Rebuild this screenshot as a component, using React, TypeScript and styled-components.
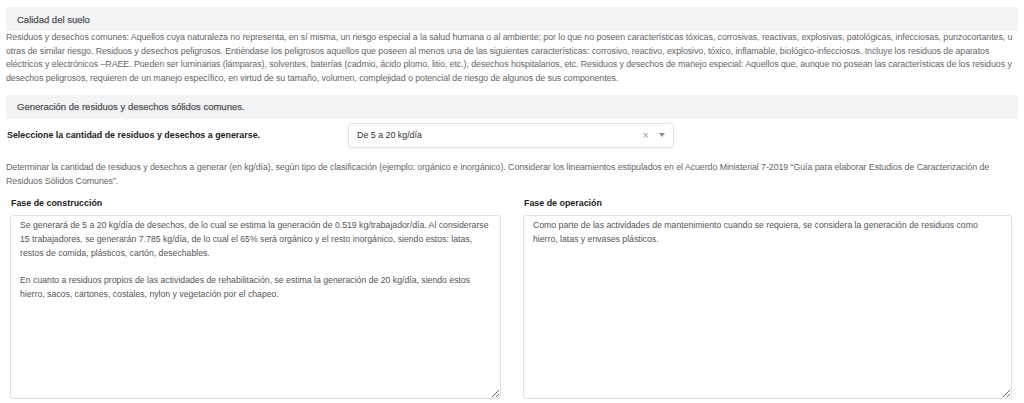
import { createGlobalStyle, styled } from 'styled-components';

const GlobalStyle = createGlobalStyle`
  html, body {
    margin: 0;
    padding: 0;
    background: #fff;
  }
  body {
    font-family: "Liberation Sans", Arial, sans-serif;
    font-size: 8.85px;
    color: #5f6368;
  }
`;

const Page = styled.div`
  padding: 7px 6px 0 6px;
`;

const SectionBar = styled.div`
  height: 24px;
  display: flex;
  align-items: center;
  padding: 0 11px;
  background: #f2f3f5;
  color: #555;
  font-size: 9.5px;
  -webkit-text-stroke: 0.25px #555;
`;

const Paragraph = styled.p<{ $top?: number; $bottom?: number }>`
  margin: ${p => p.$top ?? 0}px 0 ${p => p.$bottom ?? 0}px;
  line-height: 13.7px;
  letter-spacing: -0.07px;
  color: #666;
`;

const SelectRow = styled.div`
  display: flex;
  align-items: center;
  margin: 4px 0 13px;
`;

const Label = styled.label`
  display: block;
  color: #222;
  font-weight: 700;
  font-size: 8.9px;
`;

const RowLabel = styled(Label)`
  width: 341px;
  padding-left: 1px;
`;

const SelectBox = styled.div`
  width: 326px;
  height: 25px;
  box-sizing: border-box;
  display: flex;
  align-items: center;
  padding: 0 8px 0 8px;
  border: 1px solid #e1e3e8;
  border-radius: 3px;
  box-shadow: 0 1px 2px rgba(0, 0, 0, 0.05);
  color: #333;
  background: #fff;
`;

const SelectValue = styled.span`
  flex: 1;
`;

const ClearIcon = styled.span`
  color: #9aa0a6;
  font-size: 11px;
  margin-right: 10px;
`;

const Caret = styled.span`
  width: 0;
  height: 0;
  border-left: 3.5px solid transparent;
  border-right: 3.5px solid transparent;
  border-top: 4px solid #8a8f95;
`;

const Columns = styled.div`
  display: grid;
  grid-template-columns: 491px 489px;
  column-gap: 22px;
  margin-top: 8px;
  padding-left: 4px;
`;

const Column = styled.div`
  display: flex;
  flex-direction: column;
`;

const ColumnLabel = styled(Label)`
  margin: 0 0 5px 1px;
  line-height: 14px;
`;

const TextArea = styled.textarea`
  height: 184px;
  box-sizing: border-box;
  padding: 3px 9px;
  border: 1px solid #dfe1e6;
  border-radius: 3px;
  font-family: "Liberation Sans", Arial, sans-serif;
  font-size: 8.7px;
  line-height: 13.7px;
  color: #555;
  resize: vertical;
  outline: none;
`;

const construccion = `Se generará de 5 a 20 kg/día de desechos, de lo cual se estima la generación de 0.519 kg/trabajador/día. Al considerarse 15 trabajadores, se generarán 7.785 kg/día, de lo cual el 65% será orgánico y el resto inorgánico, siendo estos: latas, restos de comida, plásticos, cartón, desechables.

En cuanto a residuos propios de las actividades de rehabilitación, se estima la generación de 20 kg/día, siendo estos hierro, sacos, cartones, costales, nylon y vegetación por el chapeo.`;

const operacion = `Como parte de las actividades de mantenimiento cuando se requiera, se considera la generación de residuos como hierro, latas y envases plásticos.`;

export default function App() {
  return (
    <>
      <GlobalStyle />
      <Page>
        <SectionBar>Calidad del suelo</SectionBar>
        <Paragraph $top={0} $bottom={9}>
          Residuos y desechos comunes: Aquellos cuya naturaleza no representa, en sí misma, un riesgo especial a la salud
          humana o al ambiente; por lo que no poseen características tóxicas, corrosivas, reactivas, explosivas,
          patológicas, infecciosas, punzocortantes, u otras de similar riesgo. Residuos y desechos peligrosos. Entiéndase
          los peligrosos aquellos que poseen al menos una de las siguientes características: corrosivo, reactivo,
          explosivo, tóxico, inflamable, biológico-infecciosos. Incluye los residuos de aparatos eléctricos y electrónicos
          –RAEE. Pueden ser luminarias (lámparas), solventes, baterías (cadmio, ácido plomo, litio, etc.), desechos
          hospitalarios, etc. Residuos y desechos de manejo especial: Aquellos que, aunque no posean las características de
          los residuos y desechos peligrosos, requieren de un manejo específico, en virtud de su tamaño, volumen,
          complejidad o potencial de riesgo de algunos de sus componentes.
        </Paragraph>

        <SectionBar>Generación de residuos y desechos sólidos comunes.</SectionBar>
        <SelectRow>
          <RowLabel>Seleccione la cantidad de residuos y desechos a generarse.</RowLabel>
          <SelectBox>
            <SelectValue>De 5 a 20 kg/día</SelectValue>
            <ClearIcon>×</ClearIcon>
            <Caret />
          </SelectBox>
        </SelectRow>
        <Paragraph>
          Determinar la cantidad de residuos y desechos a generar (en kg/día), según tipo de clasificación (ejemplo:
          orgánico e inorgánico). Considerar los lineamientos estipulados en el Acuerdo Ministerial 7-2019 “Guía para
          elaborar Estudios de Caracterización de Residuos Sólidos Comunes”.
        </Paragraph>

        <Columns>
          <Column>
            <ColumnLabel>Fase de construcción</ColumnLabel>
            <TextArea readOnly defaultValue={construccion} />
          </Column>
          <Column>
            <ColumnLabel>Fase de operación</ColumnLabel>
            <TextArea readOnly defaultValue={operacion} />
          </Column>
        </Columns>
      </Page>
    </>
  );
}
